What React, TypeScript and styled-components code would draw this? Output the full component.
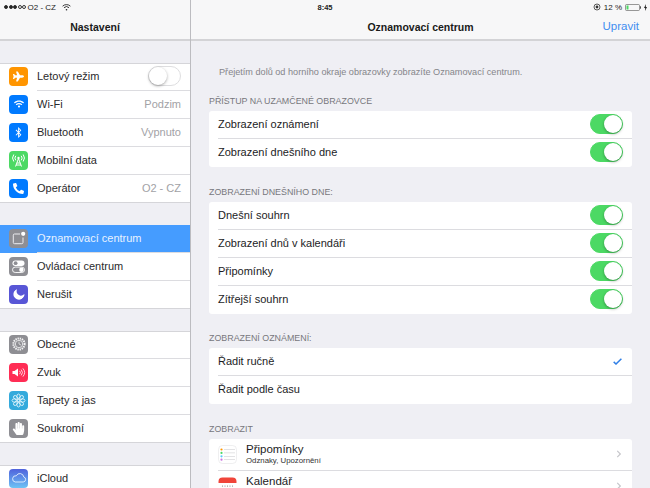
import React from 'react'
import styled, { createGlobalStyle } from 'styled-components'
import { FaPlane, FaWifi, FaBluetoothB, FaPhoneAlt, FaMoon, FaHandPaper, FaChevronRight } from 'react-icons/fa'

const Global = createGlobalStyle`
  html, body { margin: 0; padding: 0; }
  body { width: 650px; height: 488px; overflow: hidden; background: #efeff4; font-family: "Liberation Sans", Arial, sans-serif; color: #1c1c1e; }
`

const Page = styled.div`
  display: flex;
  width: 650px;
  height: 488px;
  overflow: hidden;
`

const Sidebar = styled.aside`
  width: 190px;
  flex: none;
  border-right: 1px solid #bcbcc0;
  background: #efeff4;
  overflow: hidden;
`

const Main = styled.main`
  flex: 1;
  min-width: 0;
  overflow: hidden;
`

const Bar = styled.header`
  position: relative;
  height: 39px;
  background: #f7f7f8;
  border-bottom: 2px solid #d3d3d6;
  display: flex;
  align-items: flex-end;
  justify-content: center;
`

const BarTitle = styled.div`
  font-size: 10.5px;
  font-weight: 700;
  color: #1a1a1a;
  line-height: 24px;
`

const BarAction = styled.div`
  position: absolute;
  right: 11px;
  bottom: 1px;
  font-size: 11.5px;
  line-height: 24px;
  color: #3f8ef0;
`

const Status = styled.div`
  position: absolute;
  top: 1px;
  left: 0;
  right: 0;
  height: 12px;
  display: flex;
  align-items: center;
  font-size: 8px;
  color: #222;
`

const SignalDot = styled.span<{ $on: boolean }>`
  display: inline-block;
  width: 4px;
  height: 4px;
  box-sizing: border-box;
  border-radius: 50%;
  margin-right: 0.5px;
  border: 0.7px solid #333;
  background: ${p => (p.$on ? '#222' : 'transparent')};
`

const CarrierWrap = styled.div`
  display: flex;
  align-items: center;
  padding-left: 4px;
`

const CarrierName = styled.span`
  margin-left: 1px;
`

const WifiGlyph = styled.svg`
  margin-left: 6px;
`

const Clock = styled.div`
  width: 268px;
  text-align: center;
  font-weight: 700;
  font-size: 7.5px;
  padding-top: 1px;
`

const BatteryWrap = styled.div`
  display: flex;
  align-items: center;
  gap: 3px;
  margin-left: auto;
  padding-right: 3px;
`

const Group = styled.section<{ $gap: number }>`
  margin-top: ${p => p.$gap}px;
  background: #fff;
  box-shadow: inset 0 1px #d5d5d9, inset 0 -1px #d5d5d9;
`

const SideRow = styled.div<{ $selected?: boolean }>`
  position: relative;
  height: 28px;
  box-sizing: border-box;
  display: flex;
  align-items: center;
  padding: 0 9px 2px;
  gap: 9px;
  font-size: 11px;
  background: ${p => (p.$selected ? '#459cff' : 'transparent')};
  color: ${p => (p.$selected ? '#e9f3ff' : '#2a2a2c')};
  &:not(:last-child)::after {
    content: '';
    position: absolute;
    left: 37px;
    right: 0;
    bottom: 0;
    height: 1px;
    background: #dcdce0;
  }
`

const IconTile = styled.span<{ $bg: string }>`
  width: 19px;
  height: 19px;
  flex: none;
  border-radius: 4px;
  background: ${p => p.$bg};
  display: flex;
  align-items: center;
  justify-content: center;
  color: #fff;
`

const SideLabel = styled.span`
  flex: 1;
`

const SideValue = styled.span`
  color: #a2a2a6;
  font-size: 11px;
`

const Track = styled.span<{ $on: boolean }>`
  position: relative;
  display: block;
  width: 33px;
  height: 20px;
  box-sizing: border-box;
  border-radius: 10px;
  background: ${p => (p.$on ? '#4cd964' : '#fff')};
  border: 1px solid ${p => (p.$on ? '#4cd964' : '#dedee0')};
`

const Knob = styled.span<{ $on: boolean }>`
  position: absolute;
  top: 0;
  ${p => (p.$on ? 'right: 0;' : 'left: 0;')}
  width: 18px;
  height: 18px;
  border-radius: 50%;
  background: #fff;
  box-shadow: 0 1px 3px rgba(0, 0, 0, 0.35);
`

const Content = styled.div`
  padding: 0 18px;
`

const Hint = styled.p`
  margin: 0;
  padding: 25px 0 0 10px;
  font-size: 9.15px;
  line-height: 12px;
  color: #85858a;
  white-space: nowrap;
`

const SectionTitle = styled.h2<{ $top: number }>`
  margin: ${p => p.$top}px 0 4px;
  font-size: 8.9px;
  font-weight: 400;
  line-height: 12px;
  color: #77777c;
`

const Card = styled.div`
  background: #fff;
  border-radius: 3px;
  overflow: hidden;
`

const Row = styled.div<{ $tall?: boolean }>`
  position: relative;
  height: ${p => (p.$tall ? 32 : 28)}px;
  box-sizing: border-box;
  display: flex;
  align-items: center;
  justify-content: space-between;
  padding: 0 9px 2px;
  font-size: 11px;
  color: #1c1c1e;
  &:not(:last-child)::after {
    content: '';
    position: absolute;
    left: 9px;
    right: 0;
    bottom: 0;
    height: 1px;
    background: #dcdce0;
  }
`

const AppLabel = styled.div`
  flex: 1;
  padding-left: 9px;
  font-size: 11.5px;
  line-height: 13px;
`

const AppSub = styled.div`
  font-size: 7.8px;
  line-height: 9px;
  color: #333;
`

const Chevron = styled(FaChevronRight)`
  color: #c7c7cc;
  font-size: 8px;
`

const CheckMark = styled.svg`
  margin-right: 1px;
`

const TiltedMoon = styled(FaMoon)`
  transform: rotate(-35deg);
`

const sideGroups = [
  {
    gap: 22,
    rows: [
      { label: 'Letový režim', bg: '#ff9500', icon: <FaPlane size={11} />, toggle: true },
      { label: 'Wi-Fi', value: 'Podzim', bg: '#007aff', icon: <FaWifi size={10} /> },
      { label: 'Bluetooth', value: 'Vypnuto', bg: '#007aff', icon: <FaBluetoothB size={11} /> },
      {
        label: 'Mobilní data',
        bg: '#4cd964',
        icon: (
          <svg width="15" height="15" viewBox="0 0 15 15" fill="none" stroke="#fff" strokeWidth="1">
            <circle cx="7.5" cy="5" r="1.2" fill="#fff" stroke="none" />
            <path d="M7.5 5.5 4.5 13.5M7.5 5.5l3 8M5.8 10h3.4M5 12h5" />
            <path d="M4.8 2.8a3.6 3.6 0 0 0 0 4.6M10.2 2.8a3.6 3.6 0 0 1 0 4.6M2.8 1.5a6 6 0 0 0 0 7M12.2 1.5a6 6 0 0 1 0 7" />
          </svg>
        ),
      },
      { label: 'Operátor', value: 'O2 - CZ', bg: '#007aff', icon: <FaPhoneAlt size={11} /> },
    ],
  },
  {
    gap: 22,
    rows: [
      {
        label: 'Oznamovací centrum',
        selected: true,
        bg: '#8e8e93',
        icon: (
          <svg width="15" height="15" viewBox="0 0 15 15" fill="none">
            <path d="M9 3H3.5A1.2 1.2 0 0 0 2.3 4.2v7.3a1.2 1.2 0 0 0 1.2 1.2h7.3a1.2 1.2 0 0 0 1.2-1.2V6.5" stroke="#ececef" strokeWidth="1" />
            <circle cx="12.2" cy="2.8" r="2.1" fill="#fff" />
          </svg>
        ),
      },
      {
        label: 'Ovládací centrum',
        bg: '#8e8e93',
        icon: (
          <svg width="15" height="15" viewBox="0 0 15 15">
            <rect x="1.5" y="1.5" width="12" height="5.4" rx="2.7" fill="#fff" />
            <circle cx="4.6" cy="4.2" r="1.9" fill="#8e8e93" />
            <rect x="1.5" y="8.1" width="12" height="5.4" rx="2.7" fill="none" stroke="#fff" strokeWidth="0.9" />
            <circle cx="10.4" cy="10.8" r="2.2" fill="#fff" />
          </svg>
        ),
      },
      { label: 'Nerušit', bg: '#5856d6', icon: <TiltedMoon size={11} /> },
    ],
  },
  {
    gap: 22,
    rows: [
      {
        label: 'Obecné',
        bg: '#8e8e93',
        icon: (
          <svg width="16" height="16" viewBox="0 0 16 16" fill="none" stroke="#f4f4f5">
            <circle cx="8" cy="8" r="5.6" strokeWidth="2" strokeDasharray="1.4 0.8" />
            <circle cx="8" cy="8" r="3.7" strokeWidth="0.8" />
            <path d="M8 5.6V8l2 1" strokeWidth="0.7" />
          </svg>
        ),
      },
      {
        label: 'Zvuk',
        bg: '#ff2d55',
        icon: (
          <svg width="15" height="15" viewBox="0 0 15 15" fill="none">
            <path d="M1.5 6h2L7 3.6v7.8L3.5 9h-2z" fill="#fff" />
            <path d="M8.6 5.8a2.5 2.5 0 0 1 0 3.4M10.2 4.6a4.4 4.4 0 0 1 0 5.8M11.9 3.4a6.3 6.3 0 0 1 0 8.2" stroke="#fff" strokeWidth="0.8" />
          </svg>
        ),
      },
      {
        label: 'Tapety a jas',
        bg: '#34aadc',
        icon: (
          <svg width="15" height="15" viewBox="0 0 15 15" fill="none" stroke="#dff3fb" strokeWidth="0.9">
            {[0, 45, 90, 135, 180, 225, 270, 315].map(a => (
              <ellipse key={a} cx="7.5" cy="3.7" rx="1.7" ry="2.7" transform={`rotate(${a} 7.5 7.5)`} />
            ))}
          </svg>
        ),
      },
      { label: 'Soukromí', bg: '#8e8e93', icon: <FaHandPaper size={13} /> },
    ],
  },
  {
    gap: 22,
    rows: [
      {
        label: 'iCloud',
        bg: 'linear-gradient(#4f62dc, #6ec3f5)',
        icon: (
          <svg width="16" height="16" viewBox="0 0 16 16" fill="none" stroke="#e8f3ff" strokeWidth="0.9">
            <path d="M4.2 12h8a2.6 2.6 0 0 0 .5-5.1A3.9 3.9 0 0 0 5.3 5.8 3.1 3.1 0 0 0 4.2 12z" />
          </svg>
        ),
      },
    ],
  },
]

function Toggle({ on }: { on: boolean }) {
  return (
    <Track $on={on}>
      <Knob $on={on} />
    </Track>
  )
}

function StatusLeft() {
  return (
    <CarrierWrap>
      {[true, true, true, false, false].map((on, i) => (
        <SignalDot key={i} $on={on} />
      ))}
      <CarrierName>O2 - CZ</CarrierName>
      <WifiGlyph width="9" height="7" viewBox="0 0 9 7" fill="none" stroke="#222" strokeWidth="0.9">
        <path d="M.6 2.2a5.6 5.6 0 0 1 7.8 0M2 3.7a3.6 3.6 0 0 1 5 0" />
        <circle cx="4.5" cy="5.7" r="0.8" fill="#222" stroke="none" />
      </WifiGlyph>
    </CarrierWrap>
  )
}

function StatusRight() {
  return (
    <BatteryWrap>
      <svg width="8" height="8" viewBox="0 0 8 8" fill="none" stroke="#333" strokeWidth="0.8">
        <circle cx="4" cy="4" r="3" />
        <circle cx="4" cy="4" r="1.4" fill="#333" stroke="none" />
      </svg>
      <span>12 %</span>
      <svg width="16" height="7" viewBox="0 0 16 7" fill="none">
        <rect x="0.5" y="0.5" width="14" height="6" rx="1" stroke="#555" strokeWidth="0.6" />
        <rect x="1.5" y="1.5" width="2" height="4" fill="#4cd964" />
        <rect x="15" y="2.3" width="1" height="2.4" fill="#555" />
      </svg>
      <svg width="3" height="7" viewBox="0 0 3 7">
        <path d="M2 0 0 4h1.2L1 7l2-4H1.8z" fill="#222" />
      </svg>
    </BatteryWrap>
  )
}

const RemindersIcon = () => (
  <svg width="19" height="19" viewBox="0 0 19 19">
    <rect x="0.5" y="0.5" width="18" height="18" rx="4" fill="#fff" stroke="#e4e4e6" strokeWidth="0.6" />
    {['#ff9500', '#4cd964', '#5ac8fa', '#cc73e1'].map((c, i) => (
      <g key={c}>
        <circle cx="3.5" cy={4.5 + i * 3.4} r="1.1" fill={c} />
        <rect x="6" y={4.2 + i * 3.4} width="11" height="0.6" fill="#cfcfd3" />
      </g>
    ))}
  </svg>
)

const CalendarIcon = () => (
  <svg width="19" height="19" viewBox="0 0 19 19">
    <rect x="0.5" y="0.5" width="18" height="18" rx="4" fill="#fff" />
    <path d="M.5 6V4.5a4 4 0 0 1 4-4h10a4 4 0 0 1 4 4V6z" fill="#f0453a" />
    {[0, 1, 2, 3, 4].map(i => (
      <rect key={i} x={4 + i * 2.5} y="8.6" width="1" height="1" fill="#8b8b8b" />
    ))}
  </svg>
)

export default function App() {
  return (
    <Page>
      <Global />
      <Sidebar>
        <Bar>
          <Status>
            <StatusLeft />
          </Status>
          <BarTitle>Nastavení</BarTitle>
        </Bar>
        {sideGroups.map((group, i) => (
          <Group key={i} $gap={group.gap}>
            {group.rows.map(row => (
              <SideRow key={row.label} $selected={'selected' in row && row.selected}>
                <IconTile $bg={row.bg}>{row.icon}</IconTile>
                <SideLabel>{row.label}</SideLabel>
                {'value' in row && <SideValue>{row.value}</SideValue>}
                {'toggle' in row && <Toggle on={false} />}
              </SideRow>
            ))}
          </Group>
        ))}
      </Sidebar>
      <Main>
        <Bar>
          <Status>
            <Clock>8:45</Clock>
            <StatusRight />
          </Status>
          <BarTitle>Oznamovací centrum</BarTitle>
          <BarAction>Upravit</BarAction>
        </Bar>
        <Content>
          <Hint>Přejetím dolů od horního okraje obrazovky zobrazíte Oznamovací centrum.</Hint>
          <SectionTitle $top={17}>PŘÍSTUP NA UZAMČENÉ OBRAZOVCE</SectionTitle>
          <Card>
            <Row>Zobrazení oznámení<Toggle on /></Row>
            <Row>Zobrazení dnešního dne<Toggle on /></Row>
          </Card>
          <SectionTitle $top={19}>ZOBRAZENÍ DNEŠNÍHO DNE:</SectionTitle>
          <Card>
            <Row>Dnešní souhrn<Toggle on /></Row>
            <Row>Zobrazení dnů v kalendáři<Toggle on /></Row>
            <Row>Připomínky<Toggle on /></Row>
            <Row>Zítřejší souhrn<Toggle on /></Row>
          </Card>
          <SectionTitle $top={18}>ZOBRAZENÍ OZNÁMENÍ:</SectionTitle>
          <Card>
            <Row>
              Řadit ručně
              <CheckMark width="9" height="7" viewBox="0 0 9 7" fill="none" stroke="#2f7fe6" strokeWidth="1.5">
                <path d="M.7 3.9 3 6 8.4.7" />
              </CheckMark>
            </Row>
            <Row>Řadit podle času</Row>
          </Card>
          <SectionTitle $top={19}>ZOBRAZIT</SectionTitle>
          <Card>
            <Row $tall>
              <RemindersIcon />
              <AppLabel>
                Připomínky
                <AppSub>Odznaky, Upozornění</AppSub>
              </AppLabel>
              <Chevron />
            </Row>
            <Row $tall>
              <CalendarIcon />
              <AppLabel>
                Kalendář
                <AppSub>&nbsp;</AppSub>
              </AppLabel>
              <Chevron />
            </Row>
          </Card>
        </Content>
      </Main>
    </Page>
  )
}
